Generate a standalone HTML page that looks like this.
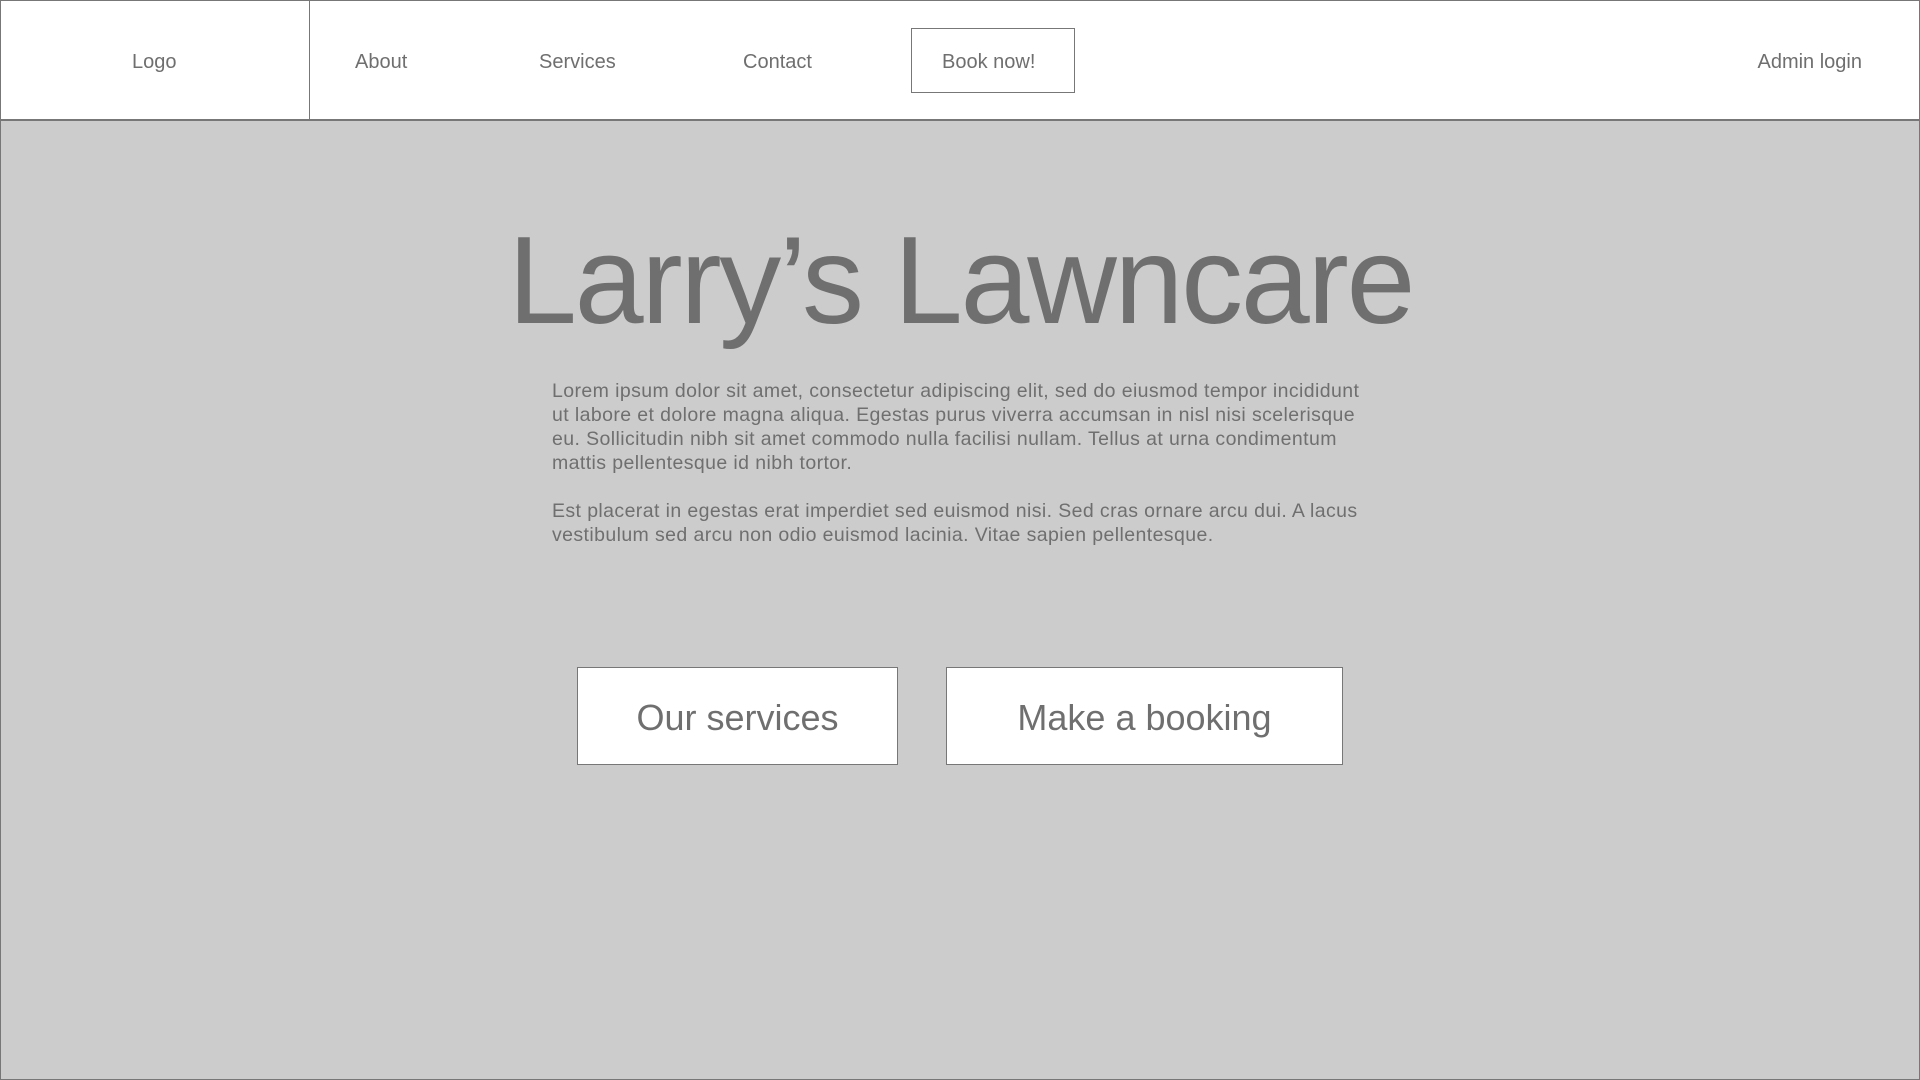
<!DOCTYPE html>
<html><head><style>
*{margin:0;padding:0;box-sizing:border-box}
body{width:1920px;height:1080px;background:#ccc;font-family:"Liberation Sans",Arial,sans-serif;color:#6f6f6f;position:relative;overflow:hidden}
.frame{position:absolute;left:0;top:0;width:1920px;height:1080px;border:1px solid #777}
.hdr{position:absolute;left:0;top:0;width:1920px;height:121px;background:#fff;border-bottom:2px solid #777}
.div{position:absolute;left:309px;top:0;width:1px;height:120px;background:#777}
.n{position:absolute;top:50px;font-size:20px;line-height:24px;white-space:nowrap}
.book{position:absolute;left:911px;top:28px;width:164px;height:65px;border:1px solid #777}
h1{position:absolute;left:508px;top:211px;font-size:124px;font-weight:normal;line-height:140px;white-space:nowrap;letter-spacing:-2.3px}
.p{position:absolute;left:552px;width:900px;font-size:19.5px;line-height:24px;white-space:nowrap;letter-spacing:0.4px}
.btn{position:absolute;top:667px;height:98px;background:#fff;border:1px solid #777;font-size:36px;text-align:center;line-height:100px}
</style></head><body>
<div class="hdr"></div>
<div class="div"></div>
<div class="n" style="left:132px">Logo</div>
<div class="n" style="left:355px">About</div>
<div class="n" style="left:539px">Services</div>
<div class="n" style="left:743px">Contact</div>
<div class="book"></div>
<div class="n" style="left:942px">Book now!</div>
<div class="n" style="right:58px">Admin login</div>
<h1>Larry’s Lawncare</h1>
<div class="p" style="top:379px">Lorem ipsum dolor sit amet, consectetur adipiscing elit, sed do eiusmod tempor incididunt<br>ut labore et dolore magna aliqua. Egestas purus viverra accumsan in nisl nisi scelerisque<br>eu. Sollicitudin nibh sit amet commodo nulla facilisi nullam. Tellus at urna condimentum<br>mattis pellentesque id nibh tortor.</div>
<div class="p" style="top:499px">Est placerat in egestas erat imperdiet sed euismod nisi. Sed cras ornare arcu dui. A lacus<br>vestibulum sed arcu non odio euismod lacinia. Vitae sapien pellentesque.</div>
<div class="btn" style="left:577px;width:321px">Our services</div>
<div class="btn" style="left:946px;width:397px">Make a booking</div>
<div class="frame"></div>
</body></html>
